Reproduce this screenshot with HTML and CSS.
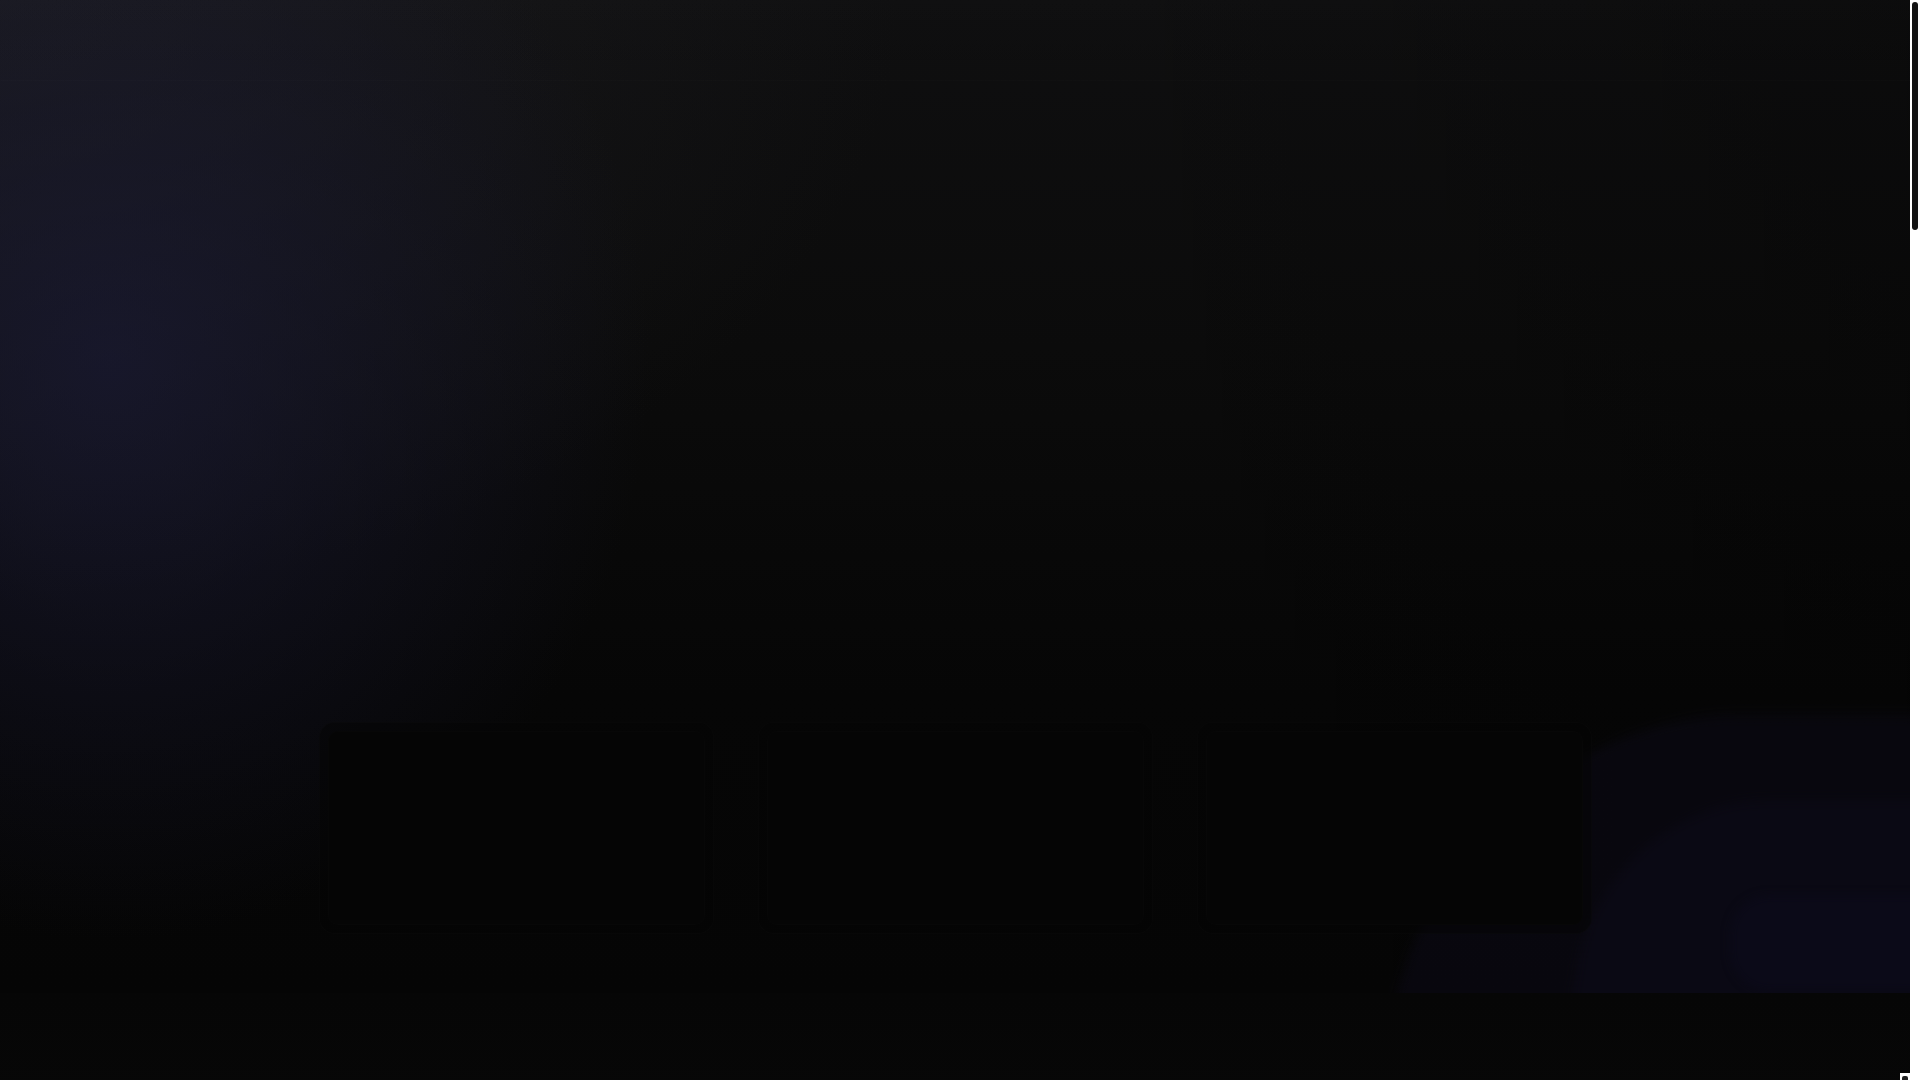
FILE: index.html
```html
<!DOCTYPE html>
<html lang="en">
<head>
<meta charset="utf-8">
<title>Landing</title>
<link rel="stylesheet" href="styles.css">
</head>
<body>
  <header class="site-header"></header>
  <main class="page">
    <section class="hero">
      <div class="hero-glow"></div>
      <div class="blob blob-outer"></div>
      <div class="blob blob-mid"></div>
      <div class="blob blob-core"></div>
      <div class="hero-inner">
        <div class="card-row">
          <div class="card"><div class="card-inner"></div></div>
          <div class="card"><div class="card-inner"></div></div>
          <div class="card"><div class="card-inner"></div></div>
        </div>
      </div>
    </section>
    <section class="rest"></section>
  </main>
  <div class="scroll-track"><div class="scroll-thumb"></div></div>
  <div class="corner-widget"><span class="corner-dot"></span></div>
</body>
</html>
```

FILE: styles.css
```css
html {
  background: #060606;
  overflow: hidden;
}
body {
  margin: 0;
  font-family: "Inter", "Liberation Sans", sans-serif;
  color: #fff;
  background: #060606;
}
.page {
  margin-right: 10px;
}
.site-header {
  position: fixed;
  top: 0;
  left: 0;
  right: 10px;
  height: 80px;
  z-index: 5;
  border-bottom: 1px solid rgba(255, 255, 255, 0.006);
  background: linear-gradient(180deg, rgba(255,255,255,0.008), rgba(255,255,255,0));
}
.hero {
  position: relative;
  height: 993px;
  overflow: hidden;
  background:
    radial-gradient(ellipse 540px 580px at 110px 360px, rgba(26, 26, 52, 0.72), rgba(26, 26, 52, 0) 100%),
    radial-gradient(ellipse 900px 600px at 0px 0px, rgba(30, 30, 34, 0.7), rgba(30, 30, 34, 0) 100%),
    linear-gradient(180deg, #0f0f10 0%, #0b0b0b 35%, #060606 70%, #050505 100%);
}
.hero-glow {
  position: absolute;
  inset: 0;
  background: linear-gradient(90deg, rgba(0,0,0,0) 55%, rgba(0,0,0,0.25) 100%);
}
.blob {
  position: absolute;
  filter: blur(6px);
}
.blob-outer {
  left: 1420px;
  top: 715px;
  width: 640px;
  height: 400px;
  border-radius: 260px 0 0 0;
  background: rgba(9, 8, 18, 0.75);
  transform: skewX(-16deg);
}
.blob-mid {
  left: 1580px;
  top: 800px;
  width: 460px;
  height: 300px;
  border-radius: 160px 0 0 0;
  background: rgba(11, 9, 22, 0.75);
  transform: skewX(-10deg);
}
.blob-core {
  left: 1730px;
  top: 895px;
  width: 240px;
  height: 96px;
  border-radius: 40px;
  background: #0b0a18;
  filter: blur(4px);
}
.hero-inner {
  position: relative;
  z-index: 1;
  display: flex;
  justify-content: center;
  padding-top: 722px;
}
.card-row {
  display: grid;
  grid-template-columns: repeat(3, 395px);
  gap: 44px;
}
.card {
  height: 212px;
  border-radius: 16px;
  padding: 8px;
  box-sizing: border-box;
  border: 1px solid rgba(255, 255, 255, 0.014);
  background: rgba(4, 4, 4, 0.5);
}
.card-inner {
  height: 100%;
  border-radius: 10px;
  border: 1px solid rgba(255, 255, 255, 0.012);
  box-sizing: border-box;
  background: #050505;
}
.rest {
  height: 4123px;
  background: linear-gradient(180deg, #060606 0%, #090909 8%, #080808 100%);
}
.scroll-track {
  position: fixed;
  top: 0;
  right: 0;
  bottom: 0;
  width: 10px;
  background: #ffffff;
  z-index: 20;
}
.scroll-thumb {
  margin: 2px 2px 0 2px;
  height: 228px;
  border-radius: 3px;
  background: #131313;
}
.corner-widget {
  position: fixed;
  right: 10px;
  bottom: 0;
  width: 10px;
  height: 7px;
  background: #ffffff;
  z-index: 10;
  display: flex;
  align-items: flex-end;
  justify-content: center;
}
.corner-dot {
  width: 6px;
  height: 4px;
  border-radius: 2px 2px 0 0;
  background: #222;
}
```
